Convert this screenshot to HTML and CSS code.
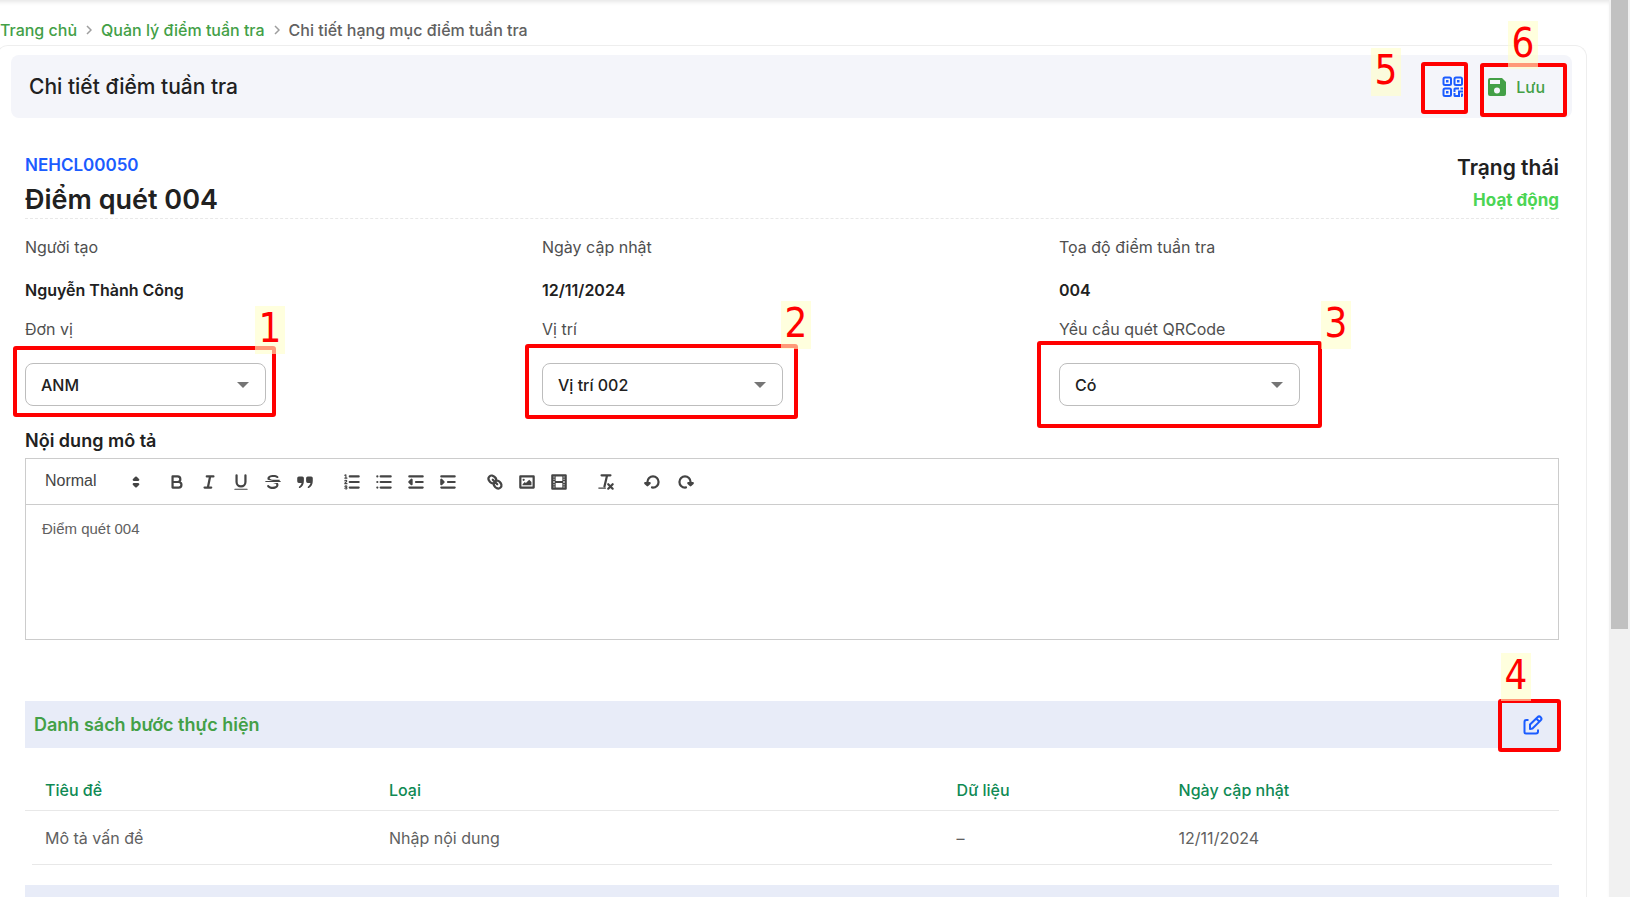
FILE: index.html
```html
<!DOCTYPE html>
<html lang="vi">
<head>
<meta charset="utf-8">
<meta name="viewport" content="width=device-width, initial-scale=1">
<title>Chi tiết điểm tuần tra</title>
<link rel="stylesheet" href="styles.css">
</head>
<body>
<div class="viewport">
  <main class="page">
    <nav class="breadcrumb" aria-label="Breadcrumb">
      <a href="#">Trang chủ</a>
      <svg class="chevron" viewBox="0 0 6 10" aria-hidden="true"><path d="M1 1l4 4-4 4"/></svg>
      <a href="#">Quản lý điểm tuần tra</a>
      <svg class="chevron" viewBox="0 0 6 10" aria-hidden="true"><path d="M1 1l4 4-4 4"/></svg>
      <span>Chi tiết hạng mục điểm tuần tra</span>
    </nav>

    <div class="card">
      <header class="toolbar">
        <h1 class="toolbar-title">Chi tiết điểm tuần tra</h1>
        <div class="toolbar-actions">
          <button class="qr-button" type="button" aria-label="QR Code">
            <svg viewBox="0 0 22 22" aria-hidden="true"><g fill="none" stroke="currentColor" stroke-width="2"><rect x="1.500" y="1.500" width="7.500" height="7.500" rx="1.500"/><rect x="12.500" y="1.500" width="7.500" height="7.500" rx="1.500"/><rect x="1.500" y="12.500" width="7.500" height="7.500" rx="1.500"/></g><path fill="currentColor" d="M4 4h2.500v2.500H4zM15 4h2.500v2.500H15zM4 15h2.500v2.500H4zM13 11.500h4v2h-3.500v2.500h-2v-3a1.500 1.500 0 0 1 1.500-1.500zM18.500 11.500h2.500v2h-2.500zM16 14.500h5v2h-3v4.500h-5v-2h3zM11.500 17h2v4h-.5a1.500 1.500 0 0 1-1.500-1.500zM19 17.500h2v2a1.500 1.500 0 0 1-1.500 1.500H19z"/></svg>
          </button>
          <button class="save-button" type="button">
            <svg viewBox="0 0 18 18" aria-hidden="true"><path fill="currentColor" fill-rule="evenodd" d="M2 0h12l4 4v12a2 2 0 0 1-2 2H2a2 2 0 0 1-2-2V2a2 2 0 0 1 2-2zm0 2v4h10V2zm7 7.500a3 3 0 1 0 0 6 3 3 0 0 0 0-6z"/></svg>
            <span>Lưu</span>
          </button>
        </div>
        <span class="mark mark-qr"></span><span class="tag tag-qr">5</span>
        <span class="mark mark-save"></span><span class="tag tag-save">6</span>
      </header>

      <div class="content">
        <section class="summary">
          <div class="summary-main">
            <div class="code">NEHCL00050</div>
            <h2 class="name">Điểm quét 004</h2>
          </div>
          <div class="summary-status">
            <div class="status-label">Trạng thái</div>
            <div class="status-value">Hoạt động</div>
          </div>
        </section>

        <section class="details">
          <div class="info"><div class="label">Người tạo</div><div class="value">Nguyễn Thành Công</div></div>
          <div class="info"><div class="label">Ngày cập nhật</div><div class="value">12/11/2024</div></div>
          <div class="info"><div class="label">Tọa độ điểm tuần tra</div><div class="value">004</div></div>
          <div class="field">
            <label class="label" for="unit">Đơn vị</label>
            <div class="select-box">
              <select id="unit"><option>ANM</option></select>
              <svg class="caret" viewBox="0 0 12 6" aria-hidden="true"><path d="M0 0h12L6 6z"/></svg>
              <span class="mark mark-unit"></span><span class="tag tag-unit">1</span>
            </div>
          </div>
          <div class="field">
            <label class="label" for="place">Vị trí</label>
            <div class="select-box">
              <select id="place"><option>Vị trí 002</option></select>
              <svg class="caret" viewBox="0 0 12 6" aria-hidden="true"><path d="M0 0h12L6 6z"/></svg>
              <span class="mark mark-place"></span><span class="tag tag-place">2</span>
            </div>
          </div>
          <div class="field">
            <label class="label" for="scan">Yều cầu quét QRCode</label>
            <div class="select-box">
              <select id="scan"><option>Có</option></select>
              <svg class="caret" viewBox="0 0 12 6" aria-hidden="true"><path d="M0 0h12L6 6z"/></svg>
              <span class="mark mark-scan"></span><span class="tag tag-scan">3</span>
            </div>
          </div>
        </section>

        <label class="editor-label" for="description">Nội dung mô tả</label>
        <div class="editor">
          <div class="editor-bar">
            <div class="format">
              <select aria-label="Kiểu chữ"><option>Normal</option></select>
              <svg class="ic" viewBox="0 0 18 18" aria-hidden="true"><path class="f s" d="M7 11l2 2 2-2zM7 7l2-2 2 2z"/></svg>
            </div>
            <div class="group">
              <button type="button" aria-label="Bold"><svg class="ic" viewBox="0 0 18 18"><path class="s" d="M5 4h4.500a2.500 2.500 0 0 1 0 5H5zM5 9h5.500a2.500 2.500 0 0 1 0 5H5z"/></svg></button>
              <button type="button" aria-label="Italic"><svg class="ic" viewBox="0 0 18 18"><path class="s" d="M7 4h6M5 14h6M8 14l2-10"/></svg></button>
              <button type="button" aria-label="Underline"><svg class="ic" viewBox="0 0 18 18"><path class="s" d="M5 3v6a4 4 0 0 0 8 0V3"/><rect class="f" x="3" y="15" width="12" height="1" rx=".5"/></svg></button>
              <button type="button" aria-label="Strike"><svg class="ic" viewBox="0 0 18 18"><path class="s thin" d="M2.500 8.500h13"/><path class="f" d="M9.007 8c.542.175 1.103.344 1.666.5H15V7H8.300C7 6.600 6 6.100 6 5.600 6 5 7.400 4.500 9.500 4.500c1.400 0 2.300.3 3 .8.500.3 1 .2 1.300-.2.200-.5.100-1-.3-1.300C12.500 3 11.200 2.600 9.500 2.600c-3.300 0-5.500 1.200-5.500 3.200 0 .5.100.9.300 1.200zM9 10c2.400.5 3 1 3 1.700 0 .8-1.200 1.600-3.200 1.600-1.500 0-2.700-.5-3.400-1.200-.4-.4-1-.4-1.400-.1-.4.400-.4 1 0 1.400 1.100 1.100 2.700 1.900 4.800 1.900 3 0 5.100-1.500 5.100-3.600 0-.7-.2-1.200-.6-1.700z"/></svg></button>
              <button type="button" aria-label="Blockquote"><svg class="ic" viewBox="0 0 18 18"><path class="f" d="M2 5.500A1.500 1.500 0 0 1 3.500 4h3A1.500 1.500 0 0 1 8 5.500V8c0 3-1.200 5-3.500 6.300-.9.400-1.500-.7-.7-1.300C5 12 5.700 11 5.900 9.800H3.500A1.500 1.500 0 0 1 2 8.300zM10 5.500A1.500 1.500 0 0 1 11.500 4h3A1.500 1.500 0 0 1 16 5.500V8c0 3-1.200 5-3.500 6.300-.9.400-1.500-.7-.7-1.300 1.200-1 1.900-2 2.100-3.200h-2.400A1.500 1.500 0 0 1 10 8.300z"/></svg></button>
            </div>
            <div class="group">
              <button type="button" aria-label="Ordered list"><svg class="ic" viewBox="0 0 18 18"><path class="s" d="M7 4h8M7 9h8M7 14h8"/><path class="s thin" d="M2.500 5.500h2M3.500 5.500v-3l-1 .5M4.500 10.500h-2c0-1 1.800-1.500 1.800-2.400 0-.8-1.400-.8-1.800-.1M2.500 14.600c1 1.300 2.200.6 1.900-.3-.2-.5-.7-.5-1.100-.5.500 0 1-.1 1.100-.6.100-.8-1.300-.9-1.800-.3"/></svg></button>
              <button type="button" aria-label="Bullet list"><svg class="ic" viewBox="0 0 18 18"><path class="s" d="M6 4h9M6 9h9M6 14h9M3 4h0M3 9h0M3 14h0"/></svg></button>
              <button type="button" aria-label="Outdent"><svg class="ic" viewBox="0 0 18 18"><path class="s" d="M3 14h12M3 4h12M9 9h6"/><path class="f s" d="M5 7v4L3 9z"/></svg></button>
              <button type="button" aria-label="Indent"><svg class="ic" viewBox="0 0 18 18"><path class="s" d="M3 14h12M3 4h12M9 9h6"/><path class="f s" d="M3 7v4l2-2z"/></svg></button>
            </div>
            <div class="group">
              <button type="button" aria-label="Link"><svg class="ic" viewBox="0 0 18 18"><path class="s" d="M7 7l4 4M8.900 4.600a3.476 3.476 0 0 1 .36 4.680 3.476 3.476 0 0 1-4.680-.36C3.200 7.500 2.500 5.500 4 4s3.500-.8 4.900.6zM13.400 9.100a3.476 3.476 0 0 0-4.680-.36 3.476 3.476 0 0 0 .36 4.680c1.400 1.400 3.400 2.100 4.900.6s.8-3.500-.6-4.900z"/></svg></button>
              <button type="button" aria-label="Image"><svg class="ic" viewBox="0 0 18 18"><rect class="s" x="3" y="4" width="12" height="10"/><circle class="f" cx="6" cy="7" r="1"/><path class="f" d="M5 12v-1l2-2 1 1 3-3 2 2v3z"/></svg></button>
              <button type="button" aria-label="Video"><svg class="ic" viewBox="0 0 18 18"><rect class="s" x="3" y="3" width="12" height="12"/><path class="f" d="M5 3h1v12H5zM12 3h1v12h-1zM5 8h8v2H5zM3 5h3v1H3zM3 7h3v1H3zM3 10h3v1H3zM3 12h3v1H3zM12 5h3v1h-3zM12 7h3v1h-3zM12 10h3v1h-3zM12 12h3v1h-3z"/></svg></button>
            </div>
            <div class="group">
              <button type="button" aria-label="Clean"><svg class="ic" viewBox="0 0 18 18"><path class="s" d="M5 3h8M7.600 13L9.850 3.600M15 11l-4 4M11 11l4 4"/><rect class="f" x="2" y="14" width="7" height="1" rx=".5"/></svg></button>
            </div>
            <div class="group">
              <button type="button" aria-label="Undo"><svg class="ic" viewBox="0 0 18 18"><path class="f s" d="M6 10l-2 2-2-2z"/><path class="s" d="M8.090 13.910A4.600 4.600 0 0 0 9 14a5 5 0 1 0-5-5"/></svg></button>
              <button type="button" aria-label="Redo"><svg class="ic" viewBox="0 0 18 18"><path class="f s" d="M12 10l2 2 2-2z"/><path class="s" d="M9.910 13.910A4.600 4.600 0 0 1 9 14a5 5 0 1 1 5-5"/></svg></button>
            </div>
          </div>
          <textarea id="description">Điểm quét 004</textarea>
        </div>

        <section>
          <header class="section-bar">
            <h3>Danh sách bước thực hiện</h3>
            <button class="edit-button" type="button" aria-label="Chỉnh sửa">
              <svg viewBox="0 0 20 20" aria-hidden="true"><path d="M5.500 5H3.500a2 2 0 0 0-2 2v10a1.500 1.500 0 0 0 1.500 1.500h10a2 2 0 0 0 2-2v-2M7 14v-4.500l7.500-7.300a2.200 2.200 0 0 1 3.200 3.200L9.500 13.500zM13.200 3.500l3.200 3.200"/></svg>
            </button>
            <span class="mark mark-edit"></span><span class="tag tag-edit">4</span>
          </header>
          <table class="steps">
            <colgroup><col class="col-title"><col class="col-type"><col class="col-data"><col></colgroup>
            <thead><tr><th>Tiêu đề</th><th>Loại</th><th>Dữ liệu</th><th>Ngày cập nhật</th></tr></thead>
            <tbody><tr><td>Mô tả vấn đề</td><td>Nhập nội dung</td><td>–</td><td>12/11/2024</td></tr></tbody>
          </table>
        </section>

        <header class="section-bar next-bar">
          <svg class="add" viewBox="0 0 20 20" aria-hidden="true"><circle cx="10" cy="10" r="10"/><path d="M10 5v10M5 10h10"/></svg>
        </header>
      </div>
    </div>
  </main>
  <div class="scroll-track"><div class="scroll-thumb"></div></div>
</div>
</body>
</html>
```

FILE: styles.css
```css
* { box-sizing: border-box; }
body {
  margin: 0;
  background: #fff;
  color: #212121;
  font-family: Inter, "Noto Sans", sans-serif;
  font-size: 16px;
  line-height: 24px;
}
h1, h2, h3 { margin: 0; font-weight: 500; }
button, select, textarea { font: inherit; color: inherit; }
button { border: 0; padding: 0; background: none; cursor: pointer; }
svg { display: block; flex: none; }

.viewport { display: flex; height: 100vh; overflow: hidden; }
.page {
  flex: 1;
  min-width: 0;
  margin-left: -4px;
  padding-right: 22px;
  box-shadow: inset 0 4px 4px -2px #e6e6e6;
}
.scroll-track { width: 21px; padding: 0 2px; background: #f1f1f1; }
.scroll-thumb { height: 629px; background: #c1c1c1; }

.breadcrumb {
  display: flex;
  align-items: center;
  gap: 9px;
  padding: 18px 0 3px 4px;
  color: #616161;
  font-size: 16px;
  font-weight: 500;
}
.breadcrumb a { color: #43a047; text-decoration: none; }
.chevron { width: 6px; height: 10px; fill: none; stroke: #9e9e9e; stroke-width: 1.500; }

.card {
  padding: 9px 14px 0;
  border: 1px solid #eee;
  border-bottom: 0;
  border-radius: 12px 12px 0 0;
}
.toolbar {
  position: relative;
  display: flex;
  align-items: center;
  justify-content: space-between;
  height: 63px;
  padding: 0 27px 0 18px;
  border-radius: 8px;
  background: #f4f5fa;
}
.toolbar-title { font-size: 21px; line-height: 28px; }
.toolbar-actions { display: flex; align-items: center; gap: 24px; }
.qr-button { color: #1b5cff; }
.qr-button svg { width: 22px; height: 22px; }
.save-button { display: flex; align-items: center; gap: 10px; color: #43a047; font-weight: 500; }
.save-button svg { width: 18px; height: 18px; }

.content { padding: 0 13px 0 14px; }
.summary {
  display: flex;
  justify-content: space-between;
  padding-top: 35px;
  border-bottom: 1px dashed #e8e8e8;
}
.code { color: #1b5cff; font-size: 17px; font-weight: 600; }
.name { padding-top: 4px; font-size: 27px; line-height: 37px; font-weight: 600; }
.summary-status { text-align: right; font-weight: 600; }
.status-label { font-size: 21px; line-height: 30px; }
.status-value { padding-top: 2px; color: #4cd554; font-size: 17px; line-height: 30px; font-weight: 700; }

.details { display: grid; grid-template-columns: repeat(3, 1fr); column-gap: 17px; }
.label { display: block; color: #4f4f4f; }
.info { padding-top: 16px; }
.value { margin-top: 19px; font-weight: 600; }
.field { padding-top: 15px; }
.select-box { position: relative; width: 241px; margin-top: 22px; }
.select-box select {
  display: block;
  width: 100%;
  height: 43px;
  padding: 0 36px 0 15px;
  border: 1px solid #bdbdbd;
  border-radius: 8px;
  appearance: none;
  background: #fff;
  font-weight: 500;
}
.caret { position: absolute; right: 17px; top: 19px; width: 12px; height: 6px; fill: #757575; }

.editor-label { display: block; margin-top: 23px; font-size: 18px; font-weight: 600; }
.editor { margin-top: 5px; border: 1px solid #ccc; font-family: "Liberation Sans", Arial, sans-serif; color: #444; }
.editor-bar { display: flex; align-items: center; flex-wrap: wrap; gap: 15px; min-height: 46px; padding-left: 19px; border-bottom: 1px solid #ccc; }
.format { display: flex; align-items: center; width: 101px; }
.format select { flex: 1; min-width: 0; height: 28px; padding: 0 0 2px; border: 0; appearance: none; background: none; }
.group { display: flex; }
.group button { display: grid; place-items: center; width: 32px; height: 28px; }
.ic { width: 20px; height: 20px; }
.s { fill: none; stroke: #444; stroke-width: 2; stroke-linecap: round; stroke-linejoin: round; }
.thin { stroke-width: 1; }
.f { fill: #444; }
.editor textarea {
  display: block;
  width: 100%;
  height: 134px;
  padding: 12px 16px;
  border: 0;
  outline: 0;
  resize: none;
  background: none;
  color: #616161;
  font-size: 15px;
}

.section-bar {
  position: relative;
  display: flex;
  align-items: center;
  justify-content: space-between;
  height: 47px;
  margin-top: 61px;
  padding: 0 16px 0 9px;
  background: #e8ecf8;
}
.section-bar h3 { color: #43a047; font-size: 18px; font-weight: 600; }
.edit-button svg { width: 20px; height: 20px; fill: none; stroke: #1b5cff; stroke-width: 2; stroke-linejoin: round; }
.steps { width: 100%; margin-top: 17px; border-collapse: collapse; table-layout: fixed; text-align: left; }
.steps th { height: 45px; padding: 6px 0 0 20px; border-bottom: 1px solid #e8e8e8; color: #0f8a54; font-weight: 500; }
.steps td { height: 55px; padding: 0 0 0 20px; color: #616161; }
.steps tbody tr { background: linear-gradient(#e8e8e8, #e8e8e8) bottom center / calc(100% - 14px) 1px no-repeat; }
.steps th:not(:first-child), .steps td:not(:first-child) { padding-left: 0; }
.col-title { width: 364px; }
.col-type { width: 37%; }
.col-data { width: 222px; }
.next-bar { align-items: flex-start; justify-content: flex-end; margin-top: 20px; padding: 12px 73px 0 0; }
.add { width: 20px; height: 20px; fill: #43a047; }
.add path { stroke: #fff; stroke-width: 2; }

.mark { position: absolute; border: 4px solid #f00; border-radius: 3px; pointer-events: none; }
.tag {
  position: absolute;
  width: 30px;
  height: 48px;
  background: rgba(255, 255, 200, 0.6);
  color: #f00;
  font-family: "DejaVu Sans Condensed", "DejaVu Sans", sans-serif;
  font-size: 40px;
  line-height: 44px;
  text-align: center;
}
.mark-qr { right: 104px; top: 7px; width: 47px; height: 52px; }
.tag-qr { right: 171px; top: -7px; }
.mark-save { right: 5px; top: 8px; width: 87px; height: 54px; }
.tag-save { right: 34px; top: -34px; }
.mark-unit { left: -12px; top: -17px; width: 263px; height: 71px; }
.tag-unit { left: 230px; top: -57px; }
.mark-place { left: -17px; top: -19px; width: 273px; height: 75px; }
.tag-place { left: 239px; top: -62px; }
.mark-scan { left: -22px; top: -22px; width: 285px; height: 87px; }
.tag-scan { left: 262px; top: -62px; }
.mark-edit { right: -2px; top: -2px; width: 63px; height: 53px; }
.tag-edit { right: 28px; top: -48px; }
```
